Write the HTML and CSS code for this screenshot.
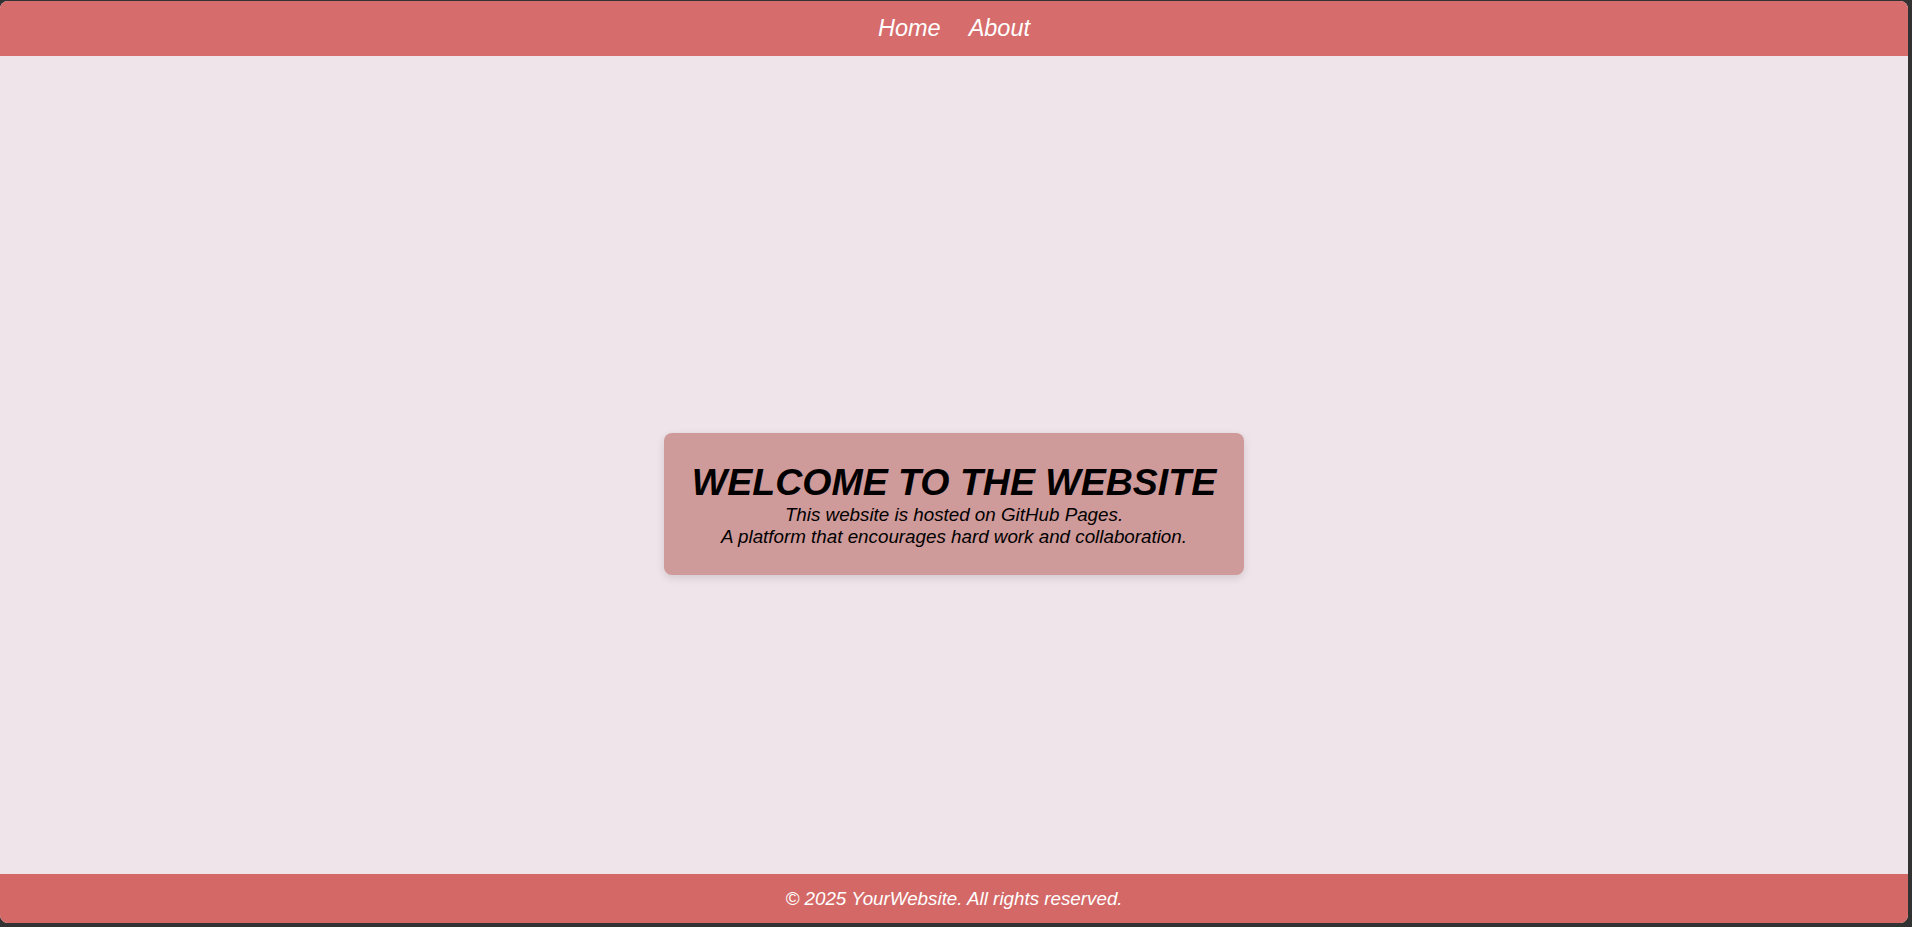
FILE: index.html
```html
<!DOCTYPE html>
<html lang="en">
<head>
<meta charset="utf-8">
<title>Welcome</title>
<link rel="stylesheet" href="styles.css">
</head>
<body>
<div class="window">
  <header class="site-header">
    <nav class="nav">
      <a class="nav-link" href="#">Home</a>
      <a class="nav-link" href="#">About</a>
    </nav>
  </header>
  <main class="content">
    <section class="hero">
      <h1 class="hero-title">WELCOME TO THE WEBSITE</h1>
      <p class="hero-text">This website is hosted on GitHub Pages.<br>A platform that encourages hard work and collaboration.</p>
    </section>
  </main>
  <footer class="site-footer">
    <p class="footer-text">© 2025 YourWebsite. All rights reserved.</p>
  </footer>
</div>
</body>
</html>
```
FILE: styles.css
```css
html, body {
  margin: 0;
  padding: 0;
  height: 100%;
}

body {
  background: #323232;
  font-family: "Liberation Sans", Arial, sans-serif;
  font-style: italic;
  font-size: 18.8px;
}

.window {
  box-sizing: border-box;
  height: 922px;
  margin: 1px 4px 0 0;
  border-radius: 8px;
  overflow: hidden;
  background: #efe4ea;
  display: flex;
  flex-direction: column;
}

.site-header {
  box-sizing: border-box;
  height: 55px;
  padding-bottom: 2px;
  background: #d66c6c;
  display: flex;
  align-items: center;
  justify-content: center;
  flex-shrink: 0;
}

.nav {
  display: flex;
  gap: 28px;
}

.nav-link {
  color: #ffffff;
  text-decoration: none;
  font-size: 23.5px;
  line-height: 26px;
}

.content {
  flex: 1;
  display: flex;
  align-items: center;
  justify-content: center;
  padding-top: 77px;
}

.hero {
  background: #cf9a9a;
  border-radius: 8px;
  padding: 28px 28px 27px;
  text-align: center;
  color: #000000;
  box-shadow: 0 3px 8px rgba(0, 0, 0, 0.12);
}

.hero-title {
  margin: 0;
  font-size: 37.5px;
  font-weight: bold;
  line-height: normal;
}

.hero-text {
  margin: 0;
  line-height: normal;
}

.site-footer {
  height: 49px;
  background: #d46866;
  display: flex;
  align-items: center;
  justify-content: center;
  flex-shrink: 0;
}

.footer-text {
  margin: 0;
  color: #ffffff;
  line-height: normal;
}
```
